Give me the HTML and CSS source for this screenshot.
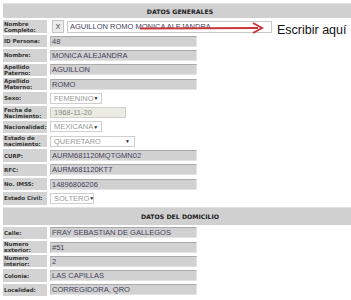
FILE: index.html
```html
<!DOCTYPE html>
<html lang="es">
<head>
<meta charset="utf-8">
<title>Datos</title>
<link rel="stylesheet" href="styles.css">
</head>
<body>
<div class="page">
<table class="form">
  <tr class="hdr"><th colspan="2">DATOS GENERALES</th></tr>
  <tr class="nc"><td class="lbl">Nombre<br>Completo:</td><td class="val"><span class="xbtn">X</span><span class="search">AGUILLON ROMO MONICA ALEJANDRA</span></td></tr>
  <tr><td class="lbl">ID Persona:</td><td class="val"><span class="fld">48</span></td></tr>
  <tr><td class="lbl">Nombre:</td><td class="val"><span class="fld">MONICA ALEJANDRA</span></td></tr>
  <tr><td class="lbl">Apellido<br>Paterno:</td><td class="val"><span class="fld">AGUILLON</span></td></tr>
  <tr><td class="lbl">Apellido<br>Materno:</td><td class="val"><span class="fld">ROMO</span></td></tr>
  <tr><td class="lbl">Sexo:</td><td class="val"><span class="sel w52">FEMENINO<i>▼</i></span></td></tr>
  <tr><td class="lbl">Fecha de<br>Nacimiento:</td><td class="val"><span class="date">1968-11-20</span></td></tr>
  <tr><td class="lbl">Nacionalidad:</td><td class="val"><span class="sel w52">MEXICANA<i>▼</i></span></td></tr>
  <tr><td class="lbl">Estado de<br>nacimiento:</td><td class="val"><span class="sel w85">QUERETARO<i>▼</i></span></td></tr>
  <tr><td class="lbl">CURP:</td><td class="val"><span class="fld">AURM681120MQTGMN02</span></td></tr>
  <tr><td class="lbl">RFC:</td><td class="val"><span class="fld">AURM681120KT7</span></td></tr>
  <tr><td class="lbl">No. IMSS:</td><td class="val"><span class="fld">14896806206</span></td></tr>
  <tr><td class="lbl">Estado Civil:</td><td class="val"><span class="sel w44">SOLTERO<i>▼</i></span></td></tr>
  <tr class="hdr hdr2"><th colspan="2">DATOS DEL DOMICILIO</th></tr>
  <tr><td class="lbl">Calle:</td><td class="val"><span class="fld">FRAY SEBASTIAN DE GALLEGOS</span></td></tr>
  <tr><td class="lbl">Numero<br>exterior:</td><td class="val"><span class="fld">#51</span></td></tr>
  <tr><td class="lbl">Numero<br>interior:</td><td class="val"><span class="fld">2</span></td></tr>
  <tr><td class="lbl">Colonia:</td><td class="val"><span class="fld">LAS CAPILLAS</span></td></tr>
  <tr><td class="lbl">Localidad:</td><td class="val"><span class="fld">CORREGIDORA, QRO</span></td></tr>
</table>
<div class="note">
  <svg class="arrow" width="126" height="12" viewBox="0 0 126 12"><path d="M0 6.5 L118 6" stroke="#c8373a" stroke-width="2" fill="none"/><path d="M113 1 L122 6 L113 11" stroke="#c8373a" stroke-width="2" fill="none"/></svg>
  <span class="hint">Escribir aquí</span>
</div>
</div>
</body>
</html>
```
FILE: styles.css
```css
html, body { margin: 0; padding: 0; background: #fff; overflow: hidden; }
.page { position: relative; width: 351px; height: 300px; overflow: hidden; }
.form {
  margin: 1px 0 0 1px;
  border-collapse: separate;
  border-spacing: 2px;
  width: 358px;
  font-family: "DejaVu Sans", Verdana, sans-serif;
}
.form td, .form th { padding: 0; }
.form tr { height: 12.3px; }
.hdr th {
  height: 15px;
  box-sizing: border-box;
  background: #d0d0d0;
  border-top: 1px solid #e2e2e2;
  font-size: 6.2px;
  font-weight: bold;
  color: #222;
  text-align: center;
  vertical-align: middle;
}
.hdr2 th { height: 18px; }
.lbl {
  width: 43px;
  height: 12.3px;
  background: #d3d3d3;
  font-size: 5.5px;
  line-height: 6px;
  font-weight: bold;
  color: #333;
  padding-left: 1px !important;
  vertical-align: middle;
  white-space: nowrap;
}
.val { vertical-align: middle; background: #fff; }
.fld, .sel, .date, .search, .xbtn {
  display: flex;
  align-items: center;
  box-sizing: border-box;
  font-family: "Liberation Sans", Arial, sans-serif;
  font-size: 7.5px;
  white-space: nowrap;
  overflow: hidden;
}
.fld {
  width: 147px;
  height: 11px;
  margin-left: 1px;
  background: #d1d1d1;
  border-top: 1px solid #a9a9a9;
  border-left: 1px solid #bdbdbd;
  border-right: 1px solid #e4e4e4;
  border-bottom: 1px solid #e4e4e4;
  color: #45425a;
  padding-left: 1px;
}
.sel {
  height: 11px;
  margin-left: 1px;
  background: #fff;
  border: 1px solid #cfcfcf;
  color: #9a9a9a;
  padding-left: 3px;
  justify-content: space-between;
}
.sel i { font-style: normal; color: #222; font-size: 5px; padding-right: 4px; }
.w52 { width: 52px; }
.w85 { width: 85px; }
.w44 { width: 44px; }
.date {
  width: 76px;
  height: 11px;
  margin-left: 1px;
  background: #ebebe4;
  border: 1px solid #cfcfcf;
  color: #8a8a8a;
  padding-left: 3px;
}
.nc .lbl { height: 13px; }
.nc .val { display: flex; align-items: center; gap: 3px; height: 13px; padding-left: 3px; }
.xbtn {
  width: 12px;
  height: 13px;
  justify-content: center;
  background: #ececec;
  border: 1px solid #c4c4c4;
  color: #444;
}
.search {
  width: 205px;
  height: 12px;
  background: #fff;
  border: 1px solid #c8c8c8;
  color: #45425a;
  padding-left: 2px;
}
.note { position: absolute; left: 140px; top: 22px; display: flex; align-items: center; }
.arrow { display: block; }
.hint {
  position: absolute;
  left: 137px;
  top: 1px;
  font-family: "Liberation Sans", Arial, sans-serif;
  font-size: 12.5px;
  color: #111;
  white-space: nowrap;
}
```
